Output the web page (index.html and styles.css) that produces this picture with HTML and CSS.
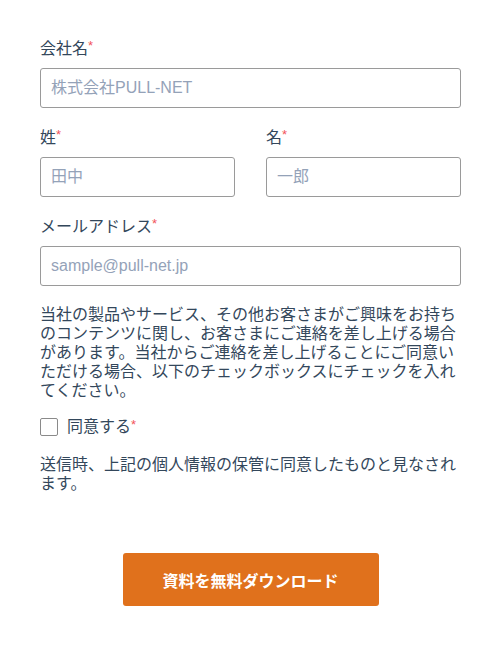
FILE: index.html
```html
<!DOCTYPE html>
<html lang="ja">
<head>
<meta charset="utf-8">
<link rel="stylesheet" href="styles.css">
</head>
<body>
<form class="form">
  <div class="field">
    <label class="label">会社名<span class="req">*</span></label>
    <input class="input" type="text" placeholder="株式会社PULL-NET">
  </div>
  <div class="row">
    <div class="field">
      <label class="label">姓<span class="req">*</span></label>
      <input class="input" type="text" placeholder="田中">
    </div>
    <div class="field">
      <label class="label">名<span class="req">*</span></label>
      <input class="input" type="text" placeholder="一郎">
    </div>
  </div>
  <div class="field">
    <label class="label">メールアドレス<span class="req">*</span></label>
    <input class="input" type="email" placeholder="sample@pull-net.jp">
  </div>
  <p class="text">当社の製品やサービス、その他お客さまがご興味をお持ちのコンテンツに関し、お客さまにご連絡を差し上げる場合があります。当社からご連絡を差し上げることにご同意いただける場合、以下のチェックボックスにチェックを入れてください。</p>
  <label class="check"><span class="box"></span><span>同意する<span class="req">*</span></span></label>
  <p class="text">送信時、上記の個人情報の保管に同意したものと見なされます。</p>
  <div class="actions">
    <button class="btn" type="button">資料を無料ダウンロード</button>
  </div>
</form>
</body>
</html>
```

FILE: styles.css
```css
html, body {
  margin: 0;
  padding: 0;
  background: #fff;
}
body {
  font-family: "Liberation Sans", "Noto Sans CJK JP", sans-serif;
  color: #33475b;
}
.form {
  width: 421px;
  padding: 38px 0 0 40px;
  display: flex;
  flex-direction: column;
}
.field {
  display: flex;
  flex-direction: column;
  margin-bottom: 19px;
}
.label {
  font-size: 16px;
  line-height: 22px;
  margin-bottom: 8px;
  color: #33475b;
}
.req {
  color: #f2545b;
  font-size: 13px;
  vertical-align: top;
  line-height: 16px;
}
.input {
  box-sizing: border-box;
  height: 40px;
  width: 100%;
  border: 1px solid #9a9a9a;
  border-radius: 3px;
  padding: 0 10px;
  font-family: "Liberation Sans", "Noto Sans CJK JP", sans-serif;
  font-size: 16px;
  color: #33475b;
  background: #fff;
}
.input::placeholder {
  color: #94a2b8;
}
.row {
  display: grid;
  grid-template-columns: 195px 195px;
  column-gap: 31px;
}
.text {
  margin: 0;
  font-size: 16px;
  line-height: 19px;
  color: #33475b;
}
.check {
  display: flex;
  align-items: center;
  gap: 9px;
  margin: 17px 0 18px;
  font-size: 16px;
  line-height: 20px;
}
.box {
  width: 16px;
  height: 16px;
  border: 1px solid #8a8a8a;
  border-radius: 2px;
  background: #fff;
}
.actions {
  display: flex;
  justify-content: center;
  margin-top: 60px;
}
.btn {
  width: 256px;
  height: 53px;
  border: none;
  border-radius: 3px;
  background: #e0711c;
  color: #fff;
  font-family: "Liberation Sans", "Noto Sans CJK JP", sans-serif;
  font-size: 16px;
  font-weight: bold;
}
```
